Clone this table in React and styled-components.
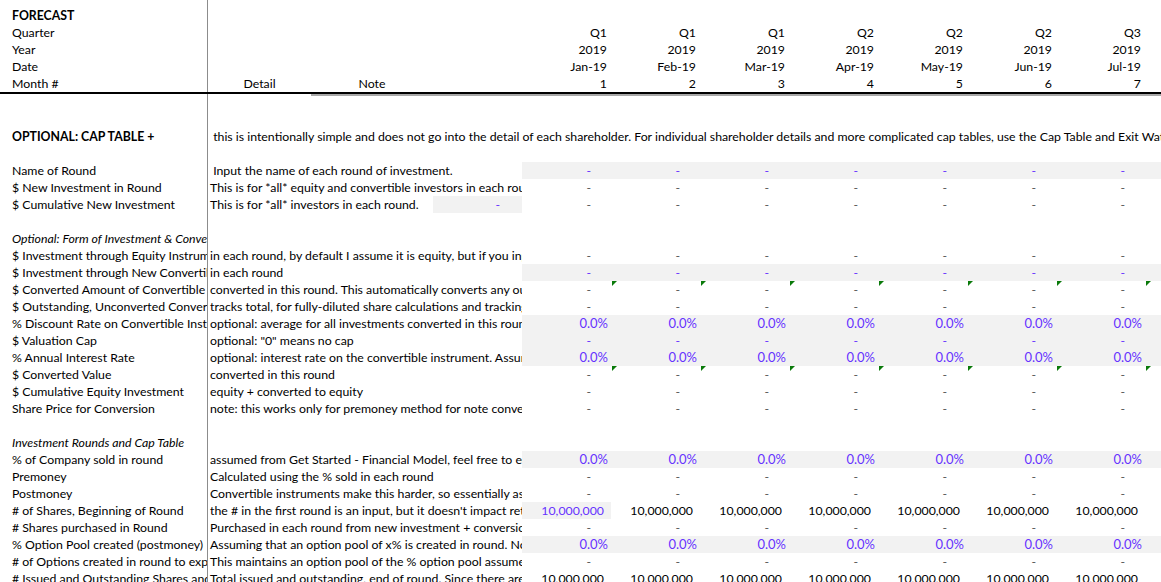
import React from "react";
import styled, { createGlobalStyle, css } from "styled-components";

const Global = createGlobalStyle`
  html, body { margin: 0; padding: 0; background: #fff; }
  body { font-family: Lato, "Noto Sans", "Liberation Sans", sans-serif; font-size: 12.3px; color: #000; }
`;

const PURPLE = "#6633ff";
const SHADE = "#f2f2f2";

const Sheet = styled.div`
  width: 1161px;
  height: 582px;
  overflow: hidden;
`;

const Row = styled.div`
  display: grid;
  grid-template-columns: 208px 103px 122px 89px repeat(8, 89px);
  height: ${(p) => p.$h || 17}px;
  line-height: 17px;
  align-items: end;
  ${(p) => p.$rule && css`border-bottom: 2px solid #000;`}
  ${(p) =>
    p.$under &&
    css`
      background: linear-gradient(to right, transparent 311px, #a8a8a8 311px) top left / 100% 2px no-repeat;
    `}
`;

const Label = styled.div`
  grid-column: 1;
  height: 100%;
  box-sizing: border-box;
  padding-left: 12px;
  border-right: 1px solid #8c8c8c;
  white-space: nowrap;
  overflow: hidden;
  display: flex;
  align-items: flex-end;
  font-weight: ${(p) => (p.$bold ? 700 : 400)};
  font-style: ${(p) => (p.$italic ? "italic" : "normal")};
`;

const Note = styled.div`
  grid-column: ${(p) => p.$cols};
  padding-left: ${(p) => (p.$center ? 0 : 2)}px;
  text-align: ${(p) => (p.$center ? "center" : "left")};
  white-space: pre;
  overflow: hidden;
`;

const Value = styled.div`
  position: relative;
  height: 17px;
  text-align: right;
  white-space: nowrap;
  padding-right: ${(p) => p.$pad}px;
  background: ${(p) => (p.$input ? SHADE : "transparent")};
  color: ${(p) => (p.$input ? PURPLE : p.$dash ? "#555" : "#000")};
  ${(p) => p.$big && css`font-size: 13px;`}
  ${(p) => p.$span && css`grid-column: ${p.$span};`}
  ${(p) =>
    p.$flag &&
    css`
      &::before {
        content: "";
        position: absolute;
        top: 0;
        left: 1px;
        width: 0;
        height: 0;
        border-top: 5px solid #0a7a0a;
        border-right: 5px solid transparent;
      }
    `}
`;

const quarters = ["Q1", "Q1", "Q1", "Q2", "Q2", "Q2", "Q3", "Q3"];
const dates = ["Jan-19", "Feb-19", "Mar-19", "Apr-19", "May-19", "Jun-19", "Jul-19", "Aug-19"];

const rows = [
  null,
  null,
  {
    label: "OPTIONAL: CAP TABLE +",
    bold: true,
    detail:
      " this is intentionally simple and does not go into the detail of each shareholder. For individual shareholder details and more complicated cap tables, use the Cap Table and Exit Waterfall tab",
    span: "2 / -1",
  },
  null,
  { label: "Name of Round", detail: " Input the name of each round of investment.", kind: "inputDash" },
  { label: "$ New Investment in Round", detail: "This is for *all* equity and convertible investors in each round", kind: "dash" },
  { label: "$ Cumulative New Investment", detail: "This is for *all* investors in each round.", dCell: true, kind: "dash" },
  null,
  { label: "Optional: Form of Investment & Convertible Instruments", italic: true, span: "2 / 5", detail: "" },
  {
    label: "$ Investment through Equity Instruments",
    detail: "in each round, by default I assume it is equity, but if you input a value for convertible",
    kind: "dash",
  },
  { label: "$ Investment through New Convertible Instruments", detail: "in each round", kind: "inputDash" },
  {
    label: "$ Converted Amount of Convertible Instruments",
    detail: "converted in this round. This automatically converts any outstanding",
    kind: "dash",
    flag: true,
  },
  {
    label: "$ Outstanding, Unconverted Convertible Instruments",
    detail: "tracks total, for fully-diluted share calculations and tracking",
    kind: "dash",
  },
  {
    label: "% Discount Rate on Convertible Instruments",
    detail: "optional: average for all investments converted in this round",
    kind: "inputPct",
  },
  { label: "$ Valuation Cap", detail: 'optional: "0" means no cap', kind: "inputDash" },
  {
    label: "% Annual Interest Rate",
    detail: "optional: interest rate on the convertible instrument. Assumes simple interest",
    kind: "inputPct",
  },
  { label: "$ Converted Value", detail: "converted in this round", kind: "dash", flag: true },
  { label: "$ Cumulative Equity Investment", detail: "equity + converted to equity", kind: "dash" },
  {
    label: "Share Price for Conversion",
    detail: "note: this works only for premoney method for note conversion",
    kind: "dash",
  },
  null,
  { label: "Investment Rounds and Cap Table", italic: true, span: "2 / 5", detail: "" },
  {
    label: "% of Company sold in round",
    detail: "assumed from Get Started - Financial Model, feel free to edit",
    kind: "inputPct",
  },
  { label: "Premoney", detail: "Calculated using the % sold in each round", kind: "dash" },
  {
    label: "Postmoney",
    detail: "Convertible instruments make this harder, so essentially assume",
    kind: "dash",
  },
  {
    label: "# of Shares, Beginning of Round",
    detail: "the # in the first round is an input, but it doesn't impact returns",
    kind: "shares",
  },
  {
    label: "# Shares purchased in Round",
    detail: "Purchased in each round from new investment + conversion",
    kind: "dash",
  },
  {
    label: "% Option Pool created (postmoney)",
    detail: "Assuming that an option pool of x% is created in round. Note",
    kind: "inputPct",
  },
  {
    label: "# of Options created in round to expand pool",
    detail: "This maintains an option pool of the % option pool assumed",
    kind: "dash",
  },
  {
    label: "# Issued and Outstanding Shares and Options",
    detail: "Total issued and outstanding, end of round. Since there are",
    kind: "total",
  },
];

function monthCells(kind, flag) {
  return Array.from({ length: 8 }, (_, i) => {
    const f = flag && i > 0;
    switch (kind) {
      case "dash":
        return <Value key={i} $pad={20} $dash $flag={f}>-</Value>;
      case "inputDash":
        return <Value key={i} $pad={20} $input $flag={f}>-</Value>;
      case "inputPct":
        return <Value key={i} $pad={3} $input $big $flag={f}>0.0%</Value>;
      case "shares":
        return (
          <Value key={i} $pad={7} $input={i === 0} $flag={f}>
            10,000,000
          </Value>
        );
      case "total":
        return <Value key={i} $pad={7} $flag={f}>10,000,000</Value>;
      default:
        return null;
    }
  });
}

function HeaderRow({ label, bold, values, h, rule, detail, note }) {
  return (
    <Row $h={h} $rule={rule}>
      <Label $bold={bold}>{label}</Label>
      {detail ? (
        <>
          <Note $cols="2" $center>{detail}</Note>
          <Note $cols="3" $center>{note}</Note>
        </>
      ) : null}
      {values &&
        values.map((v, i) => (
          <Value key={i} $pad={4} $span={`${5 + i}`}>
            {v}
          </Value>
        ))}
    </Row>
  );
}

export default function App() {
  return (
    <>
      <Global />
      <Sheet>
        <HeaderRow label="FORECAST" bold h={24} />
        <HeaderRow label="Quarter" values={quarters} />
        <HeaderRow label="Year" values={quarters.map(() => "2019")} />
        <HeaderRow label="Date" values={dates} />
        <HeaderRow
          label="Month #"
          values={dates.map((_, i) => String(i + 1))}
          detail="Detail"
          note="Note"
          rule
        />
        {rows.map((r, idx) => {
          if (!r)
            return (
              <Row key={idx} $under={idx === 0}>
                <Label />
              </Row>
            );
          const span = r.span || (r.dCell ? "2 / 4" : "2 / 5");
          return (
            <Row key={idx}>
              <Label $bold={r.bold} $italic={r.italic}>
                {r.label}
              </Label>
              <Note $cols={span}>{r.detail}</Note>
              {r.dCell && (
                <Value $pad={22} $input>
                  -
                </Value>
              )}
              {r.kind && monthCells(r.kind, r.flag)}
            </Row>
          );
        })}
      </Sheet>
    </>
  );
}
